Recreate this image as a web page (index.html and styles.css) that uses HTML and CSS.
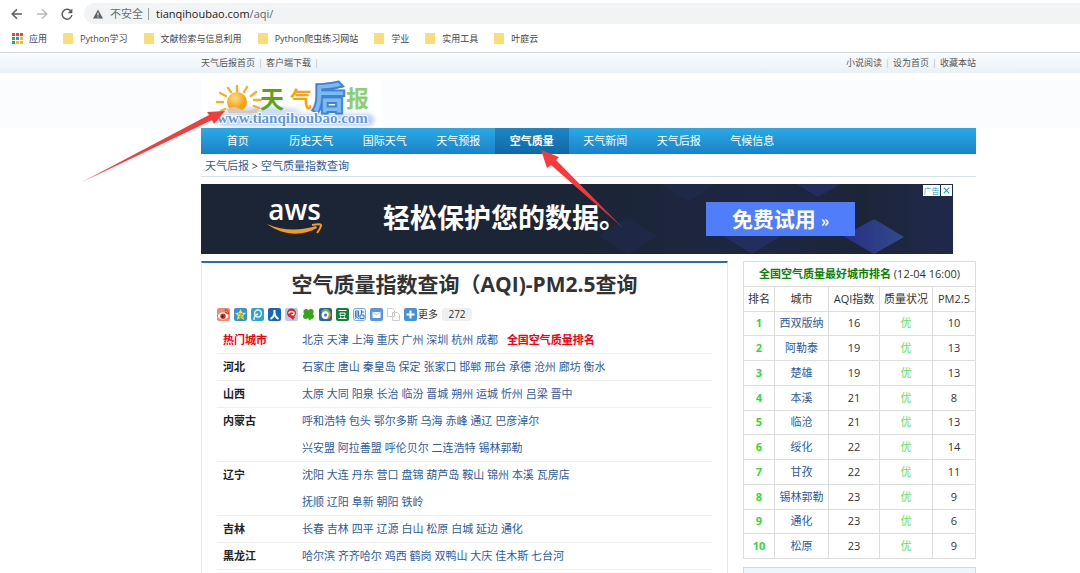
FILE: index.html
```html
<!DOCTYPE html>
<html lang="zh-CN">
<head>
<meta charset="utf-8">
<meta name="viewport" content="width=device-width, initial-scale=1">
<title>空气质量指数查询（AQI)-PM2.5查询</title>
<link rel="stylesheet" href="styles.css">
</head>
<body>
<div class="browser">
  <div class="toolbar">
    <button class="tool" aria-label="后退"><svg viewBox="0 0 12 12"><path d="M11 6H1.5M6 1.2L1.2 6L6 10.8"/></svg></button>
    <button class="tool dim" aria-label="前进"><svg viewBox="0 0 12 12"><path d="M1 6h9.5M6 1.2L10.8 6L6 10.8"/></svg></button>
    <button class="tool" aria-label="刷新"><svg viewBox="0 0 12 12"><path d="M10.2 3.6A4.9 4.9 0 1 0 10.9 7"/><path class="solid" d="M11.4 .4v4.8H6.6z"/></svg></button>
    <div class="address">
      <svg class="warn" viewBox="0 0 10 10"><path d="M5 .5L10 9.5H0z" fill="#5f6368"/><path d="M5 3.6v3M5 7.4v1.1" stroke="#fff" stroke-width="1"/></svg>
      <span class="insecure">不安全</span><span class="bar"></span>
      <span class="url">tianqihoubao.com<span class="path">/aqi/</span></span>
    </div>
  </div>
  <nav class="bookmarks" aria-label="书签">
    <a href="#"><svg class="apps" viewBox="0 0 11 11"><path fill="#ea4335" d="M0 0h3v3H0zM4 0h3v3H4zM8 0h3v3H8z"/><path fill="#34a853" d="M0 4h3v3H0zM0 8h3v3H0z"/><path fill="#4285f4" d="M4 4h3v3H4z"/><path fill="#fbbc05" d="M8 4h3v3H8zM4 8h3v3H4zM8 8h3v3H8z"/></svg>应用</a>
    <a href="#"><i class="folder"></i>Python学习</a>
    <a href="#"><i class="folder"></i>文献检索与信息利用</a>
    <a href="#"><i class="folder"></i>Python爬虫练习网站</a>
    <a href="#"><i class="folder"></i>学业</a>
    <a href="#"><i class="folder"></i>实用工具</a>
    <a href="#"><i class="folder"></i>叶庭云</a>
  </nav>
</div>

<div class="strip"><div class="wrap strip-row">
  <div><a href="#">天气后报首页</a><b>|</b><a href="#">客户端下载</a><b>|</b></div>
  <div><a href="#">小说阅读</a><b>|</b><a href="#">设为首页</a><b>|</b><a href="#">收藏本站</a></div>
</div></div>

<header class="head"><div class="wrap">
  <a class="logo" href="#" aria-label="天气后报">
    <svg viewBox="0 0 181 48">
      <defs>
        <radialGradient id="sun" cx=".4" cy=".3"><stop offset="0" stop-color="#ffe08a"/><stop offset="1" stop-color="#f7a116"/></radialGradient>
        <filter id="haze" x="-20%" y="-60%" width="140%" height="220%"><feGaussianBlur stdDeviation="2"/></filter>
      </defs>
      <rect width="181" height="48" fill="#fff"/>
      <rect x="17" y="34" width="156" height="12" rx="5" fill="#bdd2f5" filter="url(#haze)"/>
      <ellipse cx="60" cy="31" rx="40" ry="4" fill="#c8daf7" filter="url(#haze)"/>
      <g stroke="#f8ae2c" stroke-width="2.4" stroke-linecap="round"><path d="M36 6v5M27 8l3 4M19 13l6 3M16 22h6M20 31l4-2M46 7l-3 5M55 12l-5 4M60 20h-7M58 28l-5-2"/></g>
      <circle cx="36" cy="22" r="10" fill="url(#sun)"/>
      <path d="M26 29q8-4 13 0t18-1l-1 5H28z" fill="#d5c9bd"/>
      <text x="59" y="28" class="cal" font-size="24" fill="#5aa51c">天</text>
      <text x="89" y="27" class="cal" font-size="22" fill="#f5a312">气</text>
      <text x="112" y="29" class="cal block" font-size="31">后</text>
      <text x="145" y="27" class="cal" font-size="23" fill="#8ccf72">报</text>
      <text x="16" y="43" class="site">www.tianqihoubao.com</text>
    </svg>
  </a>
</div></header>

<div class="wrap page">
  <nav class="menu"><ul>
    <li><a href="#">首页</a></li><li><a href="#">历史天气</a></li><li><a href="#">国际天气</a></li><li><a href="#">天气预报</a></li><li><a class="on" href="#">空气质量</a></li><li><a href="#">天气新闻</a></li><li><a href="#">天气后报</a></li><li><a href="#">气候信息</a></li>
  </ul></nav>
  <div class="crumbs"><a href="#">天气后报</a> &gt; <a href="#">空气质量指数查询</a></div>

  <section class="ad" aria-label="广告">
    <svg class="ad-art" viewBox="0 0 752 70" preserveAspectRatio="xMaxYMid slice">
      <defs><linearGradient id="cube"><stop offset="0" stop-color="#2c2f90"/><stop offset="1" stop-color="#34519a"/></linearGradient>
      <linearGradient id="night"><stop offset=".5" stop-color="#1b2535"/><stop offset=".75" stop-color="#1d2643"/><stop offset=".88" stop-color="#1c2538"/><stop offset="1" stop-color="#20294c"/></linearGradient></defs>
      <rect width="752" height="70" fill="url(#night)"/>
      <path d="M398 52l28-18 30 18-30 18zM460 0h55l-28 18z" fill="#222c59" opacity=".4"/>
      <path d="M595 0h45l-23 13zM522 52h58l-29 18z" fill="#29357a" opacity=".5"/>
      <path d="M642 52l31-17 30 18-30 17z" fill="url(#cube)" opacity=".85"/>
    </svg>
    <div class="aws"><span>aws</span><svg viewBox="0 0 57 14"><path d="M1 1C16 12 35 14 51 5l-1-2C34 8 17 8 1 1z" fill="#f79a1c"/><path d="M46 2q10-2 9 1t-4 7" fill="none" stroke="#f79a1c" stroke-width="2"/></svg></div>
    <p class="slogan">轻松保护您的数据。</p>
    <a class="trial" href="#">免费试用 <small>»</small></a>
    <div class="ad-tag"><span>广告</span><button aria-label="关闭广告"><svg viewBox="0 0 10 10"><path d="M1 1l8 8M9 1L1 9"/></svg></button></div>
  </section>

  <div class="columns">
    <main class="aqi">
      <h1>空气质量指数查询（AQI)-PM2.5查询</h1>
      <div class="share">
        <a href="#" aria-label="新浪微博"><svg viewBox="0 0 13 13"><rect width="13" height="13" rx="2" fill="#ee8a72"/><ellipse cx="6" cy="8" rx="5" ry="3.7" fill="#fff"/><circle cx="6" cy="8.2" r="2.7" fill="#d62b20"/><circle cx="5.5" cy="8.5" r="1" fill="#222"/><path d="M7.5 2q4-1 4 4M8 4q2 0 2 2" fill="none" stroke="#d62b20"/></svg></a>
        <a href="#" aria-label="QQ空间"><svg viewBox="0 0 13 13"><rect width="13" height="13" rx="2" fill="#3495d1"/><path d="M6.5 1l1.6 3.6 4 .4-3 2.7.9 4-3.5-2-3.5 2 .9-4-3-2.7 4-.4z" fill="#ffe052"/><path d="M4 6h5L5 9h4" fill="none" stroke="#6fa635"/></svg></a>
        <a href="#" aria-label="腾讯微博"><svg viewBox="0 0 13 13"><rect width="13" height="13" rx="2" fill="#38a0cf"/><circle cx="7" cy="5.5" r="3.4" fill="none" stroke="#d9f4ff" stroke-width="1.5"/><path d="M3 12q0-5 4-6" fill="none" stroke="#e9faff" stroke-width="1.3"/></svg></a>
        <a href="#" aria-label="人人网"><svg viewBox="0 0 13 13"><rect width="13" height="13" rx="2" fill="#1767b4"/><path d="M6.5 2v3Q6 9 2.5 11M6.5 5q.5 4 4 6" fill="none" stroke="#fff" stroke-width="2"/></svg></a>
        <a href="#" aria-label="开心网"><svg viewBox="0 0 13 13"><rect width="13" height="13" rx="2" fill="#b9cbe4"/><circle cx="6.5" cy="5" r="4.5" fill="#d9252b"/><path d="M4 5.5q0-2 2.5-2t2.5 2-2.500 1" fill="none" stroke="#fff" stroke-width="1.5"/><path d="M5 9l3 3 2-3z" fill="#d9252b"/></svg></a>
        <a href="#" aria-label="朋友网"><svg viewBox="0 0 13 13"><g fill="#35a51c"><circle cx="4.200" cy="3.700" r="2.700"/><circle cx="8.900" cy="3.700" r="2.700"/><circle cx="3.700" cy="8.300" r="2.700"/><circle cx="9.200" cy="8.300" r="2.700"/><path d="M4 4h5v5H4z"/></g><path d="M6.500 7q0 4 2 5" fill="none" stroke="#35a51c" stroke-width="1.500"/></svg></a>
        <a href="#" aria-label="和讯"><svg viewBox="0 0 13 13"><rect width="13" height="13" rx="2" fill="#27689f"/><circle cx="6.5" cy="7" r="4" fill="#fff"/><path d="M3 4q4-4 7 0" fill="none" stroke="#72c247" stroke-width="2"/><path d="M10 4q2 4-1 6" fill="none" stroke="#f28b20" stroke-width="2"/><circle cx="6.5" cy="7" r="1.5" fill="#2d7bc0"/></svg></a>
        <a href="#" aria-label="豆瓣"><svg viewBox="0 0 13 13"><rect width="13" height="13" rx="2" fill="#15803a"/><path d="M2.5 2.500h8M4 5h5v2.5H4zM2.5 10.5h8M4.5 8.5l.5 2M8.5 8.5l-.5 2" fill="none" stroke="#fff"/></svg></a>
        <a href="#" aria-label="百度贴吧"><svg viewBox="0 0 13 13"><rect x=".5" y=".5" width="12" height="12" rx="2" fill="#e4effc" stroke="#7fa8dc"/><path d="M2.5 9V3h3v6M4 4v4l-2 3M4.5 9l1 2M8.5 2v4.5M8.5 4H11M7 7h4v3.5H7z" fill="none" stroke="#387bc8"/></svg></a>
        <a href="#" aria-label="邮件"><svg viewBox="0 0 13 13"><rect width="13" height="13" rx="2" fill="#5797e2"/><rect x="2.5" y="4" width="8" height="6" fill="#fff"/><path d="M2.5 4l4 3 4-3" fill="none" stroke="#a9caf0"/></svg></a>
        <a href="#" aria-label="复制"><svg viewBox="0 0 13 13"><path d="M.5.5h5l2 2v6h-7zM5.5 4.5h5l2 2v6h-7z" fill="#fff" stroke="#ccc"/></svg></a>
        <a href="#" aria-label="更多"><svg viewBox="0 0 13 13"><rect width="13" height="13" rx="2" fill="#4390df"/><path d="M6.5 2.5v8M2.5 6.5h8" stroke="#fff" stroke-width="2"/></svg></a>
        <a class="more" href="#">更多</a><span class="count">272</span>
      </div>
      <dl class="cities">
        <div><dt class="hot">热门城市</dt><dd><a href="#">北京</a> <a href="#">天津</a> <a href="#">上海</a> <a href="#">重庆</a> <a href="#">广州</a> <a href="#">深圳</a> <a href="#">杭州</a> <a href="#">成都</a> <a class="hot rank-link" href="#">全国空气质量排名</a></dd></div>
        <div><dt>河北</dt><dd><a href="#">石家庄</a> <a href="#">唐山</a> <a href="#">秦皇岛</a> <a href="#">保定</a> <a href="#">张家口</a> <a href="#">邯郸</a> <a href="#">邢台</a> <a href="#">承德</a> <a href="#">沧州</a> <a href="#">廊坊</a> <a href="#">衡水</a></dd></div>
        <div><dt>山西</dt><dd><a href="#">太原</a> <a href="#">大同</a> <a href="#">阳泉</a> <a href="#">长治</a> <a href="#">临汾</a> <a href="#">晋城</a> <a href="#">朔州</a> <a href="#">运城</a> <a href="#">忻州</a> <a href="#">吕梁</a> <a href="#">晋中</a></dd></div>
        <div><dt>内蒙古</dt><dd><a href="#">呼和浩特</a> <a href="#">包头</a> <a href="#">鄂尔多斯</a> <a href="#">乌海</a> <a href="#">赤峰</a> <a href="#">通辽</a> <a href="#">巴彦淖尔</a><br><a href="#">兴安盟</a> <a href="#">阿拉善盟</a> <a href="#">呼伦贝尔</a> <a href="#">二连浩特</a> <a href="#">锡林郭勒</a></dd></div>
        <div><dt>辽宁</dt><dd><a href="#">沈阳</a> <a href="#">大连</a> <a href="#">丹东</a> <a href="#">营口</a> <a href="#">盘锦</a> <a href="#">葫芦岛</a> <a href="#">鞍山</a> <a href="#">锦州</a> <a href="#">本溪</a> <a href="#">瓦房店</a><br><a href="#">抚顺</a> <a href="#">辽阳</a> <a href="#">阜新</a> <a href="#">朝阳</a> <a href="#">铁岭</a></dd></div>
        <div><dt>吉林</dt><dd><a href="#">长春</a> <a href="#">吉林</a> <a href="#">四平</a> <a href="#">辽源</a> <a href="#">白山</a> <a href="#">松原</a> <a href="#">白城</a> <a href="#">延边</a> <a href="#">通化</a></dd></div>
        <div><dt>黑龙江</dt><dd><a href="#">哈尔滨</a> <a href="#">齐齐哈尔</a> <a href="#">鸡西</a> <a href="#">鹤岗</a> <a href="#">双鸭山</a> <a href="#">大庆</a> <a href="#">佳木斯</a> <a href="#">七台河</a></dd></div>
      </dl>
    </main>
    <aside class="side">
      <table class="ranking">
        <colgroup><col class="c1"><col class="c2"><col class="c3"><col class="c4"><col class="c5"></colgroup>
        <tbody>
          <tr><th colspan="5"><b>全国空气质量最好城市排名</b> (12-04 16:00)</th></tr>
          <tr><th>排名</th><th>城市</th><th>AQI指数</th><th>质量状况</th><th>PM2.5</th></tr>
          <tr><td>1</td><td><a href="#">西双版纳</a></td><td>16</td><td>优</td><td>10</td></tr>
          <tr><td>2</td><td><a href="#">阿勒泰</a></td><td>19</td><td>优</td><td>13</td></tr>
          <tr><td>3</td><td><a href="#">楚雄</a></td><td>19</td><td>优</td><td>13</td></tr>
          <tr><td>4</td><td><a href="#">本溪</a></td><td>21</td><td>优</td><td>8</td></tr>
          <tr><td>5</td><td><a href="#">临沧</a></td><td>21</td><td>优</td><td>13</td></tr>
          <tr><td>6</td><td><a href="#">绥化</a></td><td>22</td><td>优</td><td>14</td></tr>
          <tr><td>7</td><td><a href="#">甘孜</a></td><td>22</td><td>优</td><td>11</td></tr>
          <tr><td>8</td><td><a href="#">锡林郭勒</a></td><td>23</td><td>优</td><td>9</td></tr>
          <tr><td>9</td><td><a href="#">通化</a></td><td>23</td><td>优</td><td>6</td></tr>
          <tr><td>10</td><td><a href="#">松原</a></td><td>23</td><td>优</td><td>9</td></tr>
        </tbody>
      </table>
      <div class="next-box"></div>
    </aside>
  </div>
</div>

<svg class="arrow arrow-logo" viewBox="0 0 144 74" aria-hidden="true"><path d="M0 73L127 6 125 3 143 2 132 15 130 11z" fill="#f93a3a"/></svg>
<svg class="arrow arrow-menu" viewBox="0 0 84 80" aria-hidden="true"><defs><linearGradient id="fade" x1="0" y1="0" x2="1" y2="1"><stop offset=".5" stop-color="#f93a3a"/><stop offset="1" stop-color="#b42f42"/></linearGradient></defs><path d="M1 1L19 8 16 11 83 79 11 16 7 19z" fill="url(#fade)"/></svg>
</body>
</html>
```
FILE: styles.css
```css
* { box-sizing: border-box; }

body {
  margin: 0;
  min-height: 100vh;
  display: flex;
  flex-direction: column;
  position: relative;
  background: #fff;
  color: #333;
  font: 11px/16px "Open Sans", "Noto Sans CJK SC", sans-serif;
}

a { color: #2d5c9e; text-decoration: none; }
button { border: 0; padding: 0; background: none; }
svg { display: block; }
h1, p, ul, dl, dd { margin: 0; padding: 0; }

/* Browser chrome */
.browser { height: 53px; padding-top: 3px; border-bottom: 1px solid #d4d6d9; }
.toolbar { display: flex; align-items: center; padding-left: 11px; gap: 13px; }
.tool { width: 12px; height: 12px; }
.tool svg { width: 12px; height: 12px; fill: none; stroke: #5a5d61; stroke-width: 1.5; }
.tool .solid { fill: #5a5d61; stroke: none; }
.tool.dim svg { stroke: #b9bbbe; }
.address {
  flex: 1;
  display: flex;
  align-items: center;
  height: 21px;
  margin-left: -2px;
  padding-left: 9px;
  border-radius: 11px 0 0 11px;
  background: #f1f3f4;
  line-height: 20px;
}
.warn { width: 10px; height: 10px; margin-right: 7px; }
.insecure { color: #6a6d71; }
.bar { width: 1px; height: 12px; margin: 0 7px 0 5px; background: #9a9da1; }
.url { color: #222; }
.path { color: #666a6e; }
.bookmarks { display: flex; gap: 16px; padding: 6px 0 0 12px; font-size: 9px; line-height: 17px; }
.bookmarks a { display: flex; align-items: center; color: #444; white-space: nowrap; }
.apps { width: 11px; height: 11px; margin-right: 6px; }
.folder { width: 10px; height: 11px; margin-right: 7px; border-radius: 1px; background: #fbdc78; }

.wrap { width: 775px; max-width: calc(100% - 201px); margin-left: 201px; }

.strip { height: 20px; background: linear-gradient(#fafcfe, #e9f1f7); }
.strip-row { display: flex; justify-content: space-between; line-height: 20px; font-size: 9px; }
.strip a { color: #555; }
.strip b { margin: 0 3px; color: #bbb; font-weight: 400; }

.head { margin-top: 7px; background: #fafcfe; }
.logo { display: block; width: 181px; height: 48px; }
.logo svg { overflow: visible; }
.cal { font-family: "Noto Sans CJK SC", sans-serif; font-weight: 700; }
.cal.block { fill: #7db9f2; stroke: #3d83cf; stroke-width: 4px; paint-order: stroke; }
.site { font: 700 15px "Liberation Serif", serif; fill: #5f99dc; stroke: #fff; stroke-width: 2px; paint-order: stroke; }

.page { flex: 1; display: flex; flex-direction: column; }
.menu { height: 26px; background: linear-gradient(#2aa9e6, #1a82c8); }
.menu ul { display: flex; max-width: 588px; list-style: none; }
.menu li { flex: 1; text-align: center; }
.menu a { display: block; height: 26px; line-height: 26px; color: #fff; }
.menu .on { background: linear-gradient(#1c87c6, #1068a5); font-weight: 700; }

.crumbs { height: 23px; padding-left: 4px; line-height: 23px; border-bottom: 1px solid #d9e2ea; }

/* Advert */
.ad { position: relative; display: flex; align-items: center; max-width: 752px; height: 70px; margin-top: 7px; color: #fff; overflow: hidden; }
.ad > * { position: relative; }
.ad .ad-art { position: absolute; inset: 0; width: 100%; height: 100%; }
.aws { width: 57px; margin-left: 65px; padding-bottom: 4px; text-align: center; }
.aws span { display: block; font: 600 28px/24px "Open Sans", sans-serif; }
.aws svg { width: 57px; height: 14px; margin-top: 2px; }
.slogan { margin-left: 60px; padding-bottom: 4px; font: 700 27px/40px "Noto Sans CJK SC", sans-serif; white-space: nowrap; }
.trial { width: 149px; height: 34px; margin: 0 98px 0 auto; background: #507dfa; color: #fff; font: 700 21px/32px "Noto Sans CJK SC", sans-serif; text-align: center; }
.trial small { font-size: 16px; }
.ad .ad-tag { position: absolute; top: 1px; right: 1px; display: flex; gap: 1px; }
.ad-tag span { width: 17px; height: 11px; background: #fff; color: #27a5c5; font-size: 8px; line-height: 11px; text-align: center; }
.ad-tag button { width: 11px; height: 11px; padding: 2px; background: #fff; }
.ad-tag svg { width: 7px; height: 7px; stroke: #16a0c4; stroke-width: 1.5; }

.columns { flex: 1; display: flex; justify-content: space-between; margin-top: 7px; }

.aqi { width: 527px; padding: 0 15px; border: solid #e4eaf0; border-width: 0 1px; border-top: 2px solid #2a6fad; }
.aqi h1 { padding-top: 6px; font-size: 21px; line-height: 30px; text-align: center; white-space: nowrap; }
.share { display: flex; align-items: center; gap: 4px; height: 20px; margin-top: 5px; }
.share svg { width: 13px; height: 13px; }
.share .more { margin-left: -3px; color: #333; font-size: 10px; }
.count { width: 30px; border-radius: 3px; background: #f0f0f0; font-size: 10px; line-height: 13px; text-align: center; }
.cities { margin-top: 2px; line-height: 27px; }
.cities div { display: flex; padding-left: 6px; box-shadow: 0 1px #f0f0f0; }
.cities dt { width: 79px; font-weight: 700; color: #222; }
.cities .hot { color: #f5000f; }
.cities .rank-link { margin-left: 6px; font-weight: 700; }

.side { width: 233px; display: flex; flex-direction: column; }
.ranking { width: 100%; height: 298px; border-collapse: collapse; table-layout: fixed; text-align: center; line-height: 16px; }
.ranking th, .ranking td { padding: 0; border: 1px solid #dedede; font-weight: 400; white-space: nowrap; }
.ranking b { color: #0a820a; }
.c1 { width: 31px; }
.c2 { width: 54px; }
.c3 { width: 51px; }
.c4 { width: 53px; }
.ranking td:first-child { color: #32dc32; font-weight: 700; }
.ranking td:nth-child(4) { color: #5be35b; }
.next-box { flex: 1; margin-top: 8px; border: 1px solid #c9dce8; border-bottom: 0; background: #edf6fd; }

/* Annotation arrows over the page */
.arrow { position: absolute; pointer-events: none; }
.arrow-logo { left: 82px; top: 109px; width: 144px; height: 74px; }
.arrow-menu { left: 540px; top: 149px; width: 84px; height: 80px; }
```
